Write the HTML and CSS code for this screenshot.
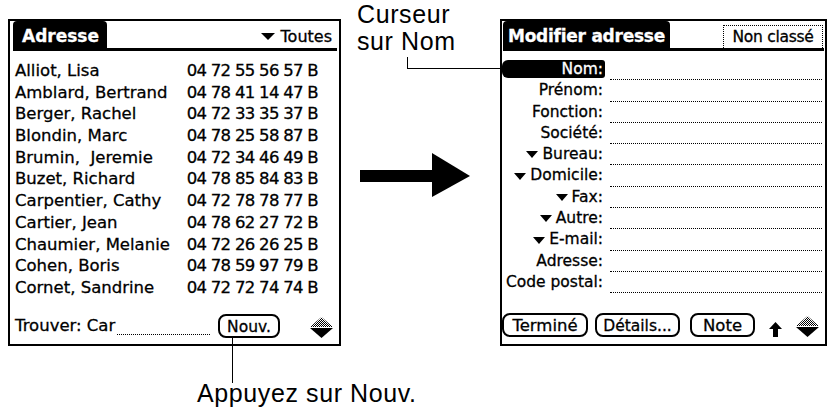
FILE: index.html
```html
<!DOCTYPE html>
<html lang="fr">
<head>
<meta charset="utf-8">
<title>Adresse – Nouvelle entrée</title>
<link rel="stylesheet" href="styles.css">
</head>
<body>
<div class="page">
  <div class="col-left">
    <section class="screen screen-list">
      <header class="hdr">
        <div class="tab tab-list">Adresse</div>
        <div class="cat"><svg class="tri" viewBox="0 0 14 7" width="14" height="7"><polygon points="0,0 14,0 7,7"/></svg>Toutes</div>
      </header>
      <div class="list">
        <div class="row"><span class="name">Alliot, Lisa</span><span class="tel">04 72 55 56 57 B</span></div>
        <div class="row"><span class="name">Amblard, Bertrand</span><span class="tel">04 78 41 14 47 B</span></div>
        <div class="row"><span class="name">Berger, Rachel</span><span class="tel">04 72 33 35 37 B</span></div>
        <div class="row"><span class="name">Blondin, Marc</span><span class="tel">04 78 25 58 87 B</span></div>
        <div class="row"><span class="name">Brumin,  Jeremie</span><span class="tel">04 72 34 46 49 B</span></div>
        <div class="row"><span class="name">Buzet, Richard</span><span class="tel">04 78 85 84 83 B</span></div>
        <div class="row"><span class="name">Carpentier, Cathy</span><span class="tel">04 72 78 78 77 B</span></div>
        <div class="row"><span class="name">Cartier, Jean</span><span class="tel">04 78 62 27 72 B</span></div>
        <div class="row"><span class="name">Chaumier, Melanie</span><span class="tel">04 72 26 26 25 B</span></div>
        <div class="row"><span class="name">Cohen, Boris</span><span class="tel">04 78 59 97 79 B</span></div>
        <div class="row"><span class="name">Cornet, Sandrine</span><span class="tel">04 72 72 74 74 B</span></div>
      </div>
      <footer class="foot foot-list">
        <span class="find">Trouver: Car</span>
        <span class="find-line"></span>
        <span class="btn btn-nouv">Nouv.</span>
        <svg class="scroll" viewBox="0 0 23 21" width="23" height="21">
          <defs><pattern id="dith1" width="2" height="2" patternUnits="userSpaceOnUse"><rect width="1" height="1"/><rect x="1" y="1" width="1" height="1"/></pattern></defs>
          <polygon points="0,10 11.5,0 23,10" fill="url(#dith1)"/>
          <polygon points="0,11 23,11 11.5,21"/>
        </svg>
      </footer>
    </section>
    <p class="caption caption-bottom">Appuyez sur Nouv.</p>
  </div>

  <div class="col-mid">
    <p class="caption caption-top">Curseur<br>sur Nom</p>
    <svg class="big-arrow" viewBox="0 0 110 44" width="110" height="44"><rect x="0" y="17" width="74" height="12"/><polygon points="72,0 110,23 72,44"/></svg>
  </div>

  <section class="screen screen-edit">
    <header class="hdr hdr-edit">
      <div class="tab tab-edit">Modifier adresse</div>
      <div class="catbox">Non classé</div>
    </header>
    <div class="fields">
      <div class="frow"><span class="lbl sel">Nom:</span><span class="fld"></span></div>
      <div class="frow"><span class="lbl">Prénom:</span><span class="fld"></span></div>
      <div class="frow"><span class="lbl">Fonction:</span><span class="fld"></span></div>
      <div class="frow"><span class="lbl">Société:</span><span class="fld"></span></div>
      <div class="frow"><span class="lbl"><svg class="tri tri-s" viewBox="0 0 12 7" width="12" height="7"><polygon points="0,0 12,0 6,7"/></svg>Bureau:</span><span class="fld"></span></div>
      <div class="frow"><span class="lbl"><svg class="tri tri-s" viewBox="0 0 12 7" width="12" height="7"><polygon points="0,0 12,0 6,7"/></svg>Domicile:</span><span class="fld"></span></div>
      <div class="frow"><span class="lbl"><svg class="tri tri-s" viewBox="0 0 12 7" width="12" height="7"><polygon points="0,0 12,0 6,7"/></svg>Fax:</span><span class="fld"></span></div>
      <div class="frow"><span class="lbl"><svg class="tri tri-s" viewBox="0 0 12 7" width="12" height="7"><polygon points="0,0 12,0 6,7"/></svg>Autre:</span><span class="fld"></span></div>
      <div class="frow"><span class="lbl"><svg class="tri tri-s" viewBox="0 0 12 7" width="12" height="7"><polygon points="0,0 12,0 6,7"/></svg>E-mail:</span><span class="fld"></span></div>
      <div class="frow"><span class="lbl">Adresse:</span><span class="fld"></span></div>
      <div class="frow"><span class="lbl">Code postal:</span><span class="fld"></span></div>
    </div>
    <footer class="foot foot-edit">
      <span class="btn btn-termine">Terminé</span>
      <span class="btn btn-details">Détails...</span>
      <span class="btn btn-note">Note</span>
      <svg class="up" viewBox="0 0 13 15" width="13" height="15"><polygon points="6.5,0 13,7 9,7 9,15 4,15 4,7 0,7"/></svg>
      <svg class="scroll scroll-edit" viewBox="0 0 23 21" width="23" height="21">
        <defs><pattern id="dith2" width="2" height="2" patternUnits="userSpaceOnUse"><rect width="1" height="1"/><rect x="1" y="1" width="1" height="1"/></pattern></defs>
        <polygon points="0,10 11.5,0 23,10" fill="url(#dith2)"/>
        <polygon points="0,11 23,11 11.5,21"/>
      </svg>
    </footer>
  </section>

  <span class="lead lead-nom"></span>
  <span class="lead lead-nouv"></span>
</div>
</body>
</html>
```

FILE: styles.css
```css
* { box-sizing: border-box; }

html, body {
  margin: 0;
  background: #fff;
}

body {
  font-family: "DejaVu Sans", "Noto Sans", sans-serif;
  color: #000;
}

.page {
  position: relative;
  display: flex;
  align-items: flex-start;
  width: 831px;
  height: 412px;
  overflow: hidden;
}

/* ---------- columns ---------- */
.col-left {
  margin: 19px 0 0 8px;
  width: 333px;
  display: flex;
  flex-direction: column;
}

.col-mid {
  width: 159px;
  margin-top: 1px;
  display: flex;
  flex-direction: column;
}

.caption {
  margin: 0;
  font-family: "Liberation Sans", Arial, sans-serif;
  font-size: 25px;
  letter-spacing: 0.6px;
  line-height: 27px;
  color: #000;
}

.caption-top {
  padding-left: 16px;
}

.caption-bottom {
  margin-top: 34px;
  padding-left: 189px;
  white-space: nowrap;
}

.big-arrow {
  display: block;
  margin: 98px 0 0 19px;
}

/* ---------- Palm screens ---------- */
.screen {
  border: 2px solid #000;
  height: 327px;
  display: flex;
  flex-direction: column;
  font-size: 15.5px;
  line-height: normal;
  -webkit-text-stroke: 0.3px currentColor;
}

.screen-list { width: 333px; }

.screen-edit {
  width: 327px;
  margin-top: 19px;
}

.hdr {
  display: flex;
  height: 30px;
  border-bottom: 3px solid #000;
  margin: 0 2px 0 3px;
}

.hdr-edit { margin: 0 1px 0 1px; }

.tab {
  background: #000;
  color: #fff;
  font-weight: bold;
  font-size: 17px;
  display: flex;
  align-items: center;
  padding-top: 3px;
  border-radius: 4px 4px 0 0;
  white-space: nowrap;
}

.tab-list { padding-left: 9px; padding-right: 8px; }
.tab-edit { padding-left: 5px; padding-right: 5px; letter-spacing: -0.25px; }

.cat {
  margin-left: auto;
  display: flex;
  align-items: center;
  padding: 3px 5px 0 0;
  font-size: 16px;
}

.tri { display: block; margin-right: 6px; }
.tri-s { margin-right: 4px; }

.catbox {
  margin-left: auto;
  margin-right: 1px;
  align-self: flex-end;
  width: 100px;
  height: 23px;
  border: 1px dotted #000;
  border-bottom: none;
  display: flex;
  align-items: center;
  justify-content: center;
  white-space: nowrap;
  letter-spacing: -0.3px;
}

/* list */
.list {
  padding: 9px 21px 0 5px;
  font-size: 16.5px;
}

.row {
  display: flex;
  justify-content: space-between;
  height: 21.7px;
  line-height: 21.7px;
  white-space: pre;
}

.tel { letter-spacing: -0.7px; }

/* footers */
.foot {
  margin-top: auto;
  display: flex;
  align-items: flex-end;
  height: 24px;
}

.foot-list {
  margin-bottom: 6px;
  padding: 0 6px 0 5px;
}

.foot-edit {
  margin-bottom: 7px;
  padding: 0 4px 0 0;
}

.find {
  font-size: 16.5px;
  line-height: 24px;
  padding-top: 3px;
  white-space: nowrap;
}

.find-line {
  flex: 1;
  margin: 0 8px 3px 2px;
  border-bottom: 1px dotted #000;
}

.btn {
  flex: none;
  height: 24px;
  border: 2px solid #000;
  border-radius: 8px;
  display: flex;
  align-items: center;
  justify-content: center;
  padding-top: 1px;
  white-space: nowrap;
}

.btn-nouv { width: 62px; }
.btn-termine { width: 86px; font-size: 16.5px; }
.btn-details { width: 85px; margin-left: 7px; }
.btn-note { width: 65px; margin-left: 10px; font-size: 16.5px; }

.scroll { display: block; flex: none; margin-left: 30px; }
.scroll-edit { margin-left: 14px; }
.up { display: block; flex: none; margin-left: 14px; }

/* edit fields */
.fields { padding-top: 8px; }

.frow {
  display: flex;
  height: 21.3px;
}

.lbl {
  width: 103px;
  flex: none;
  display: flex;
  justify-content: flex-end;
  align-items: center;
  padding-right: 2px;
  line-height: 21.3px;
  white-space: nowrap;
}

.lbl.sel {
  background: #000;
  color: #fff;
  border-radius: 6px 3px 3px 6px;
  height: 18px;
  margin-top: 1px;
  line-height: 18px;
}

.fld {
  flex: 1;
  margin: 0 3px 0 5px;
  border-bottom: 1px dotted #000;
}

/* leader lines (annotation overlays) */
.lead {
  position: absolute;
  display: block;
}

.lead-nom {
  left: 407px;
  top: 57px;
  width: 96px;
  height: 12px;
  border-left: 1px solid #000;
  border-bottom: 1px solid #000;
}

.lead-nouv {
  left: 232px;
  top: 338px;
  width: 1px;
  height: 45px;
  background: #000;
}
```
